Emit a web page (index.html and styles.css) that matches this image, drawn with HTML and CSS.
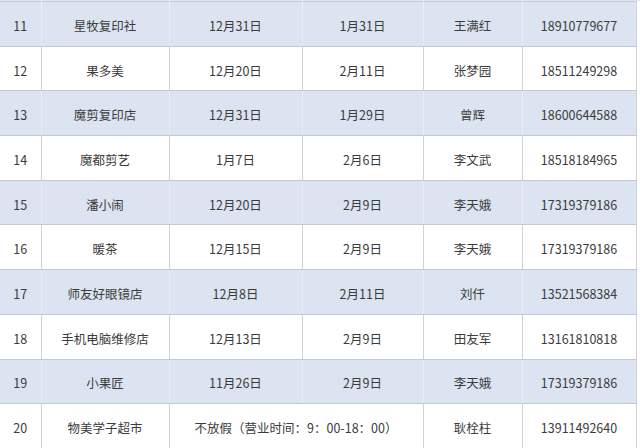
FILE: index.html
```html
<!DOCTYPE html>
<html lang="zh">
<head>
<meta charset="utf-8">
<link rel="stylesheet" href="styles.css">
</head>
<body>
<div class="wrap">
<table class="tbl">
<colgroup>
<col class="c1"><col class="c2"><col class="c3"><col class="c4"><col class="c5"><col class="c6">
</colgroup>
<tbody>
<tr class="blue"><td>11</td><td>星牧复印社</td><td>12月31日</td><td>1月31日</td><td>王满红</td><td>18910779677</td></tr>
<tr><td>12</td><td>果多美</td><td>12月20日</td><td>2月11日</td><td>张梦园</td><td>18511249298</td></tr>
<tr class="blue"><td>13</td><td>魔剪复印店</td><td>12月31日</td><td>1月29日</td><td>曾辉</td><td>18600644588</td></tr>
<tr><td>14</td><td>魔都剪艺</td><td>1月7日</td><td>2月6日</td><td>李文武</td><td>18518184965</td></tr>
<tr class="blue"><td>15</td><td>潘小闹</td><td>12月20日</td><td>2月9日</td><td>李天娥</td><td>17319379186</td></tr>
<tr><td>16</td><td>暖茶</td><td>12月15日</td><td>2月9日</td><td>李天娥</td><td>17319379186</td></tr>
<tr class="blue"><td>17</td><td>师友好眼镜店</td><td>12月8日</td><td>2月11日</td><td>刘仟</td><td>13521568384</td></tr>
<tr><td>18</td><td>手机电脑维修店</td><td>12月13日</td><td>2月9日</td><td>田友军</td><td>13161810818</td></tr>
<tr class="blue"><td>19</td><td>小果匠</td><td>11月26日</td><td>2月9日</td><td>李天娥</td><td>17319379186</td></tr>
<tr><td>20</td><td>物美学子超市</td><td colspan="2">不放假（营业时间：9：00-18：00）</td><td>耿栓柱</td><td>13911492640</td></tr>
</tbody>
</table>
</div>
</body>
</html>
```
FILE: styles.css
```css
html, body {
  margin: 0;
  padding: 0;
  background: #ffffff;
}
.wrap {
  width: 640px;
  height: 448px;
  overflow: hidden;
  padding-top: 1px;
  background: linear-gradient(#dfe6f1 0 1px, #ffffff 1px);
  box-sizing: border-box;
}
.tbl {
  border-collapse: collapse;
  table-layout: fixed;
  width: 636px;
  font-family: "Noto Sans CJK SC", "Liberation Sans", sans-serif;
  font-size: 12.5px;
  color: #3b3b3b;
}
.c1 { width: 41px; }
.c2 { width: 128px; }
.c3 { width: 133px; }
.c4 { width: 121px; }
.c5 { width: 99px; }
.c6 { width: 114px; }
.tbl td {
  height: 44.7px;
  padding: 3px 0 0 0;
  box-sizing: border-box;
  text-align: center;
  vertical-align: middle;
  border-top: 1px solid #c3c8d1;
  border-bottom: 1px solid #c3c8d1;
  border-left: 1px solid #d2d2d2;
  border-right: 1px solid #d2d2d2;
  background: #ffffff;
  white-space: nowrap;
}
.tbl td:first-child {
  border-left: none;
}
.tbl tr.blue td {
  background: #dce4f1;
  border-left-color: #e9eef6;
  border-right-color: #e9eef6;
}
.tbl tr.blue td:last-child {
  border-right-color: #d2d2d2;
}
```
